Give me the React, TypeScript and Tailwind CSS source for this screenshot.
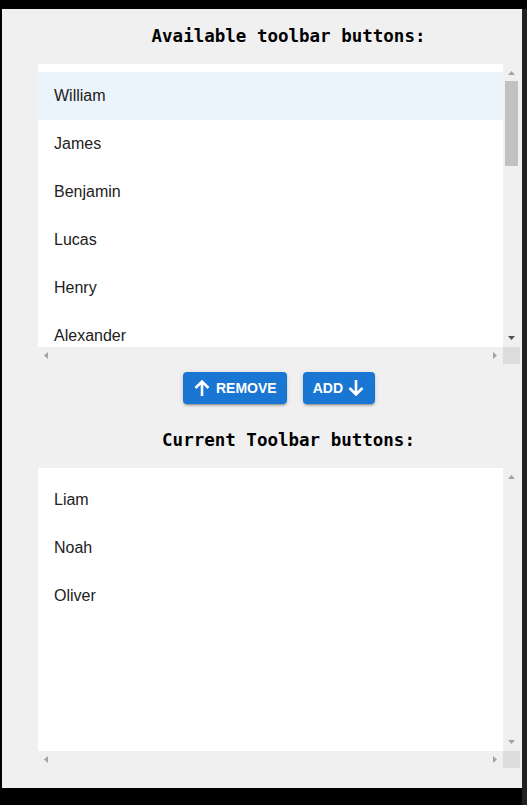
type ListBoxProps = {
  items: string[];
  selected?: number;
  thumb?: boolean;
};

function Tri({ dir, color }: { dir: "up" | "down" | "left" | "right"; color: string }) {
  const pts = {
    up: "3.5,0 7,4 0,4",
    down: "0,0 7,0 3.5,4",
    left: "4,0 4,7 0,3.5",
    right: "0,0 4,3.5 0,7",
  }[dir];
  const vertical = dir === "up" || dir === "down";
  return (
    <svg width={vertical ? 7 : 4} height={vertical ? 4 : 7} viewBox={vertical ? "0 0 7 4" : "0 0 4 7"}>
      <polygon points={pts} fill={color} />
    </svg>
  );
}

function ListBox({ items, selected, thumb }: ListBoxProps) {
  return (
    <div className="ml-[36px] grid h-[300px] w-[482px] grid-cols-[465px_17px] grid-rows-[283px_17px]">
      <div className="overflow-hidden bg-white pt-2">
        {items.map((name, index) => (
          <div
            key={name}
            className={`flex h-12 items-center pl-4 text-[16px] text-[#212121] ${index === selected ? "bg-[#ebf3fb]" : ""}`}
          >
            {name}
          </div>
        ))}
      </div>
      <div className="relative bg-[#f0f0f0]">
        <div className="absolute left-[5px] top-[7px] flex">
          <Tri dir="up" color="#a3a3a3" />
        </div>
        {thumb && <div className="absolute left-[2px] top-[17px] h-[85px] w-[13px] bg-[#c1c1c1]" />}
        <div className="absolute bottom-[7px] left-[5px] flex">
          <Tri dir="down" color={thumb ? "#505050" : "#a3a3a3"} />
        </div>
      </div>
      <div className="flex items-center justify-between bg-[#f0f0f0] px-[6px]">
        <Tri dir="left" color="#a3a3a3" />
        <Tri dir="right" color="#a3a3a3" />
      </div>
      <div className="bg-[#dcdcdc]" />
    </div>
  );
}

// material-style arrow, drawn a bit heavier like the reference
function Arrow({ down }: { down?: boolean }) {
  return (
    <svg width="20" height="20" viewBox="0 0 20 20" className={down ? "rotate-180" : ""}>
      <path d="M10 18V3.5M3.5 10L10 3.5L16.5 10" fill="none" stroke="currentColor" strokeWidth="2.6" />
    </svg>
  );
}

export default function App() {
  const available = ["William", "James", "Benjamin", "Lucas", "Henry", "Alexander"];
  const current = ["Liam", "Noah", "Oliver"];
  const titleCls =
    "flex h-6 items-center justify-center pl-[53px] text-[17.5px] font-bold text-black [font-family:'DejaVu_Sans_Mono',monospace]";
  const btnCls =
    "flex h-8 items-center rounded bg-[#1976d2] px-[10px] text-[14px] font-bold uppercase text-white shadow-[0_3px_1px_-2px_rgba(0,0,0,0.2),0_2px_2px_0_rgba(0,0,0,0.14),0_1px_5px_0_rgba(0,0,0,0.12)]";

  return (
    <div className="flex h-[805px] w-[527px] flex-col bg-black pt-[9px] [font-family:'Liberation_Sans',Arial,sans-serif]">
      <div className="flex flex-1">
        <div className="ml-[2px] h-[779px] w-[520px] bg-[#f0f0f0] pt-[15px]">
          <div className={titleCls}>Available toolbar buttons:</div>
          <div className="mt-4">
            <ListBox items={available} selected={0} thumb />
          </div>
          <div className="ml-[36px] mt-2 flex w-[482px] justify-center gap-4">
            <button className={btnCls}>
              <span className="-ml-[1px] mr-[4px] flex">
                <Arrow />
              </span>
              Remove
            </button>
            <button className={btnCls}>
              Add
              <span className="-mr-[1px] ml-[3px] flex">
                <Arrow down />
              </span>
            </button>
          </div>
          <div className={`mt-6 ${titleCls}`}>Current Toolbar buttons:</div>
          <div className="mt-4">
            <ListBox items={current} />
          </div>
        </div>
        <div className="w-[5px] bg-[#1f2125]" />
      </div>
    </div>
  );
}
